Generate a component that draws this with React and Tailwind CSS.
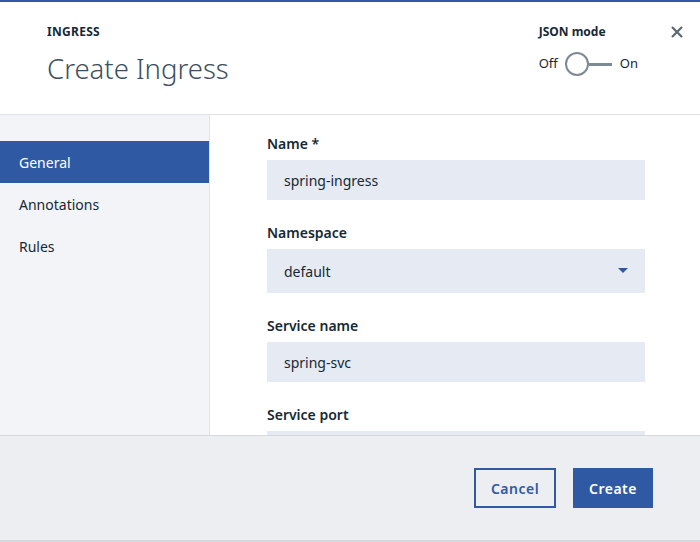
import React from "react"

function Field({ label, children, className = "" }) {
    return (
        <div className={className}>
            <div className="text-[14px] font-semibold text-[#152935] leading-[18px] mb-[7px]">{label}</div>
            {children}
        </div>
    )
}

export default function App() {
    return (
        <div className="w-[700px] h-[542px] flex flex-col bg-white overflow-hidden" style={{ fontFamily: '"Noto Sans", "Open Sans", sans-serif' }}>
            <div className="h-[2px] bg-[#3059a3]" />
            {/* header */}
            <div className="h-[113px] border-b border-[#dfe3e6] flex justify-between pl-[47px] pr-[16px] pt-[22px] shrink-0">
                <div>
                    <div className="text-[12px] font-bold tracking-[0.3px] text-[#152935] leading-[16px]">INGRESS</div>
                    <div className="text-[27.5px] font-light text-[#3d4f5f] leading-[32px] mt-[13px]">Create Ingress</div>
                </div>
                <div className="flex">
                    <div className="mr-[32px]">
                        <div className="text-[12px] font-bold text-[#152935] leading-[16px]">JSON mode</div>
                        <div className="flex items-center mt-[12px] text-[13px] text-[#152935]">
                            <span>Off</span>
                            <span className="ml-[7px] w-[24px] h-[24px] rounded-full border-2 border-[#7d8a95] bg-white" />
                            <span className="w-[23px] h-[3px] bg-[#7d8a95]" />
                            <span className="ml-[8px]">On</span>
                        </div>
                    </div>
                    <svg width="14" height="14" viewBox="0 0 14 14" className="mt-[1px]">
                        <path d="M2 2 L12 12 M12 2 L2 12" stroke="#5a6872" strokeWidth="2.2" />
                    </svg>
                </div>
            </div>
            {/* body */}
            <div className="flex flex-1 min-h-0">
                <div className="w-[210px] bg-[#f3f4f8] border-r border-[#dfe3e6] pt-[26px] shrink-0">
                    <div className="h-[42px] bg-[#3059a3] text-white text-[14px] flex items-center pl-[19px]">General</div>
                    <div className="h-[42px] text-[#152935] text-[14px] flex items-center pl-[19px]">Annotations</div>
                    <div className="h-[42px] text-[#152935] text-[14px] flex items-center pl-[19px]">Rules</div>
                </div>
                <div className="flex-1 pl-[57px] pt-[20px] overflow-hidden">
                    <div className="w-[378px]">
                        <Field label="Name *">
                            <div className="h-[40px] bg-[#e6eaf2] flex items-center pl-[17px] text-[14px] text-[#152935]">spring-ingress</div>
                        </Field>
                        <Field label="Namespace" className="mt-[24px]">
                            <div className="h-[44px] bg-[#e6eaf2] flex items-center justify-between pl-[17px] pr-[17px] text-[14px] text-[#152935]">
                                <span>default</span>
                                <svg width="10" height="6" viewBox="0 0 10 6"><path d="M0 0 H10 L5 5 Z" fill="#3059a3" /></svg>
                            </div>
                        </Field>
                        <Field label="Service name" className="mt-[24px]">
                            <div className="h-[40px] bg-[#e6eaf2] flex items-center pl-[17px] text-[14px] text-[#152935]">spring-svc</div>
                        </Field>
                        <Field label="Service port" className="mt-[24px]">
                            <div className="h-[40px] bg-[#e6eaf2]" />
                        </Field>
                    </div>
                </div>
            </div>
            {/* footer */}
            <div className="h-[107px] bg-[#eceef1] border-t border-[#d5d9dd] border-b-2 border-b-[#d5d9dd] flex justify-end items-start pt-[32px] pr-[47px] gap-[17px] shrink-0">
                <button className="h-[40px] w-[82px] border-2 border-[#3059a3] text-[#3059a3] text-[14px] font-semibold tracking-[0.5px]">Cancel</button>
                <button className="h-[40px] w-[80px] bg-[#3059a3] text-white text-[14px] font-semibold tracking-[0.5px]">Create</button>
            </div>
        </div>
    )
}
